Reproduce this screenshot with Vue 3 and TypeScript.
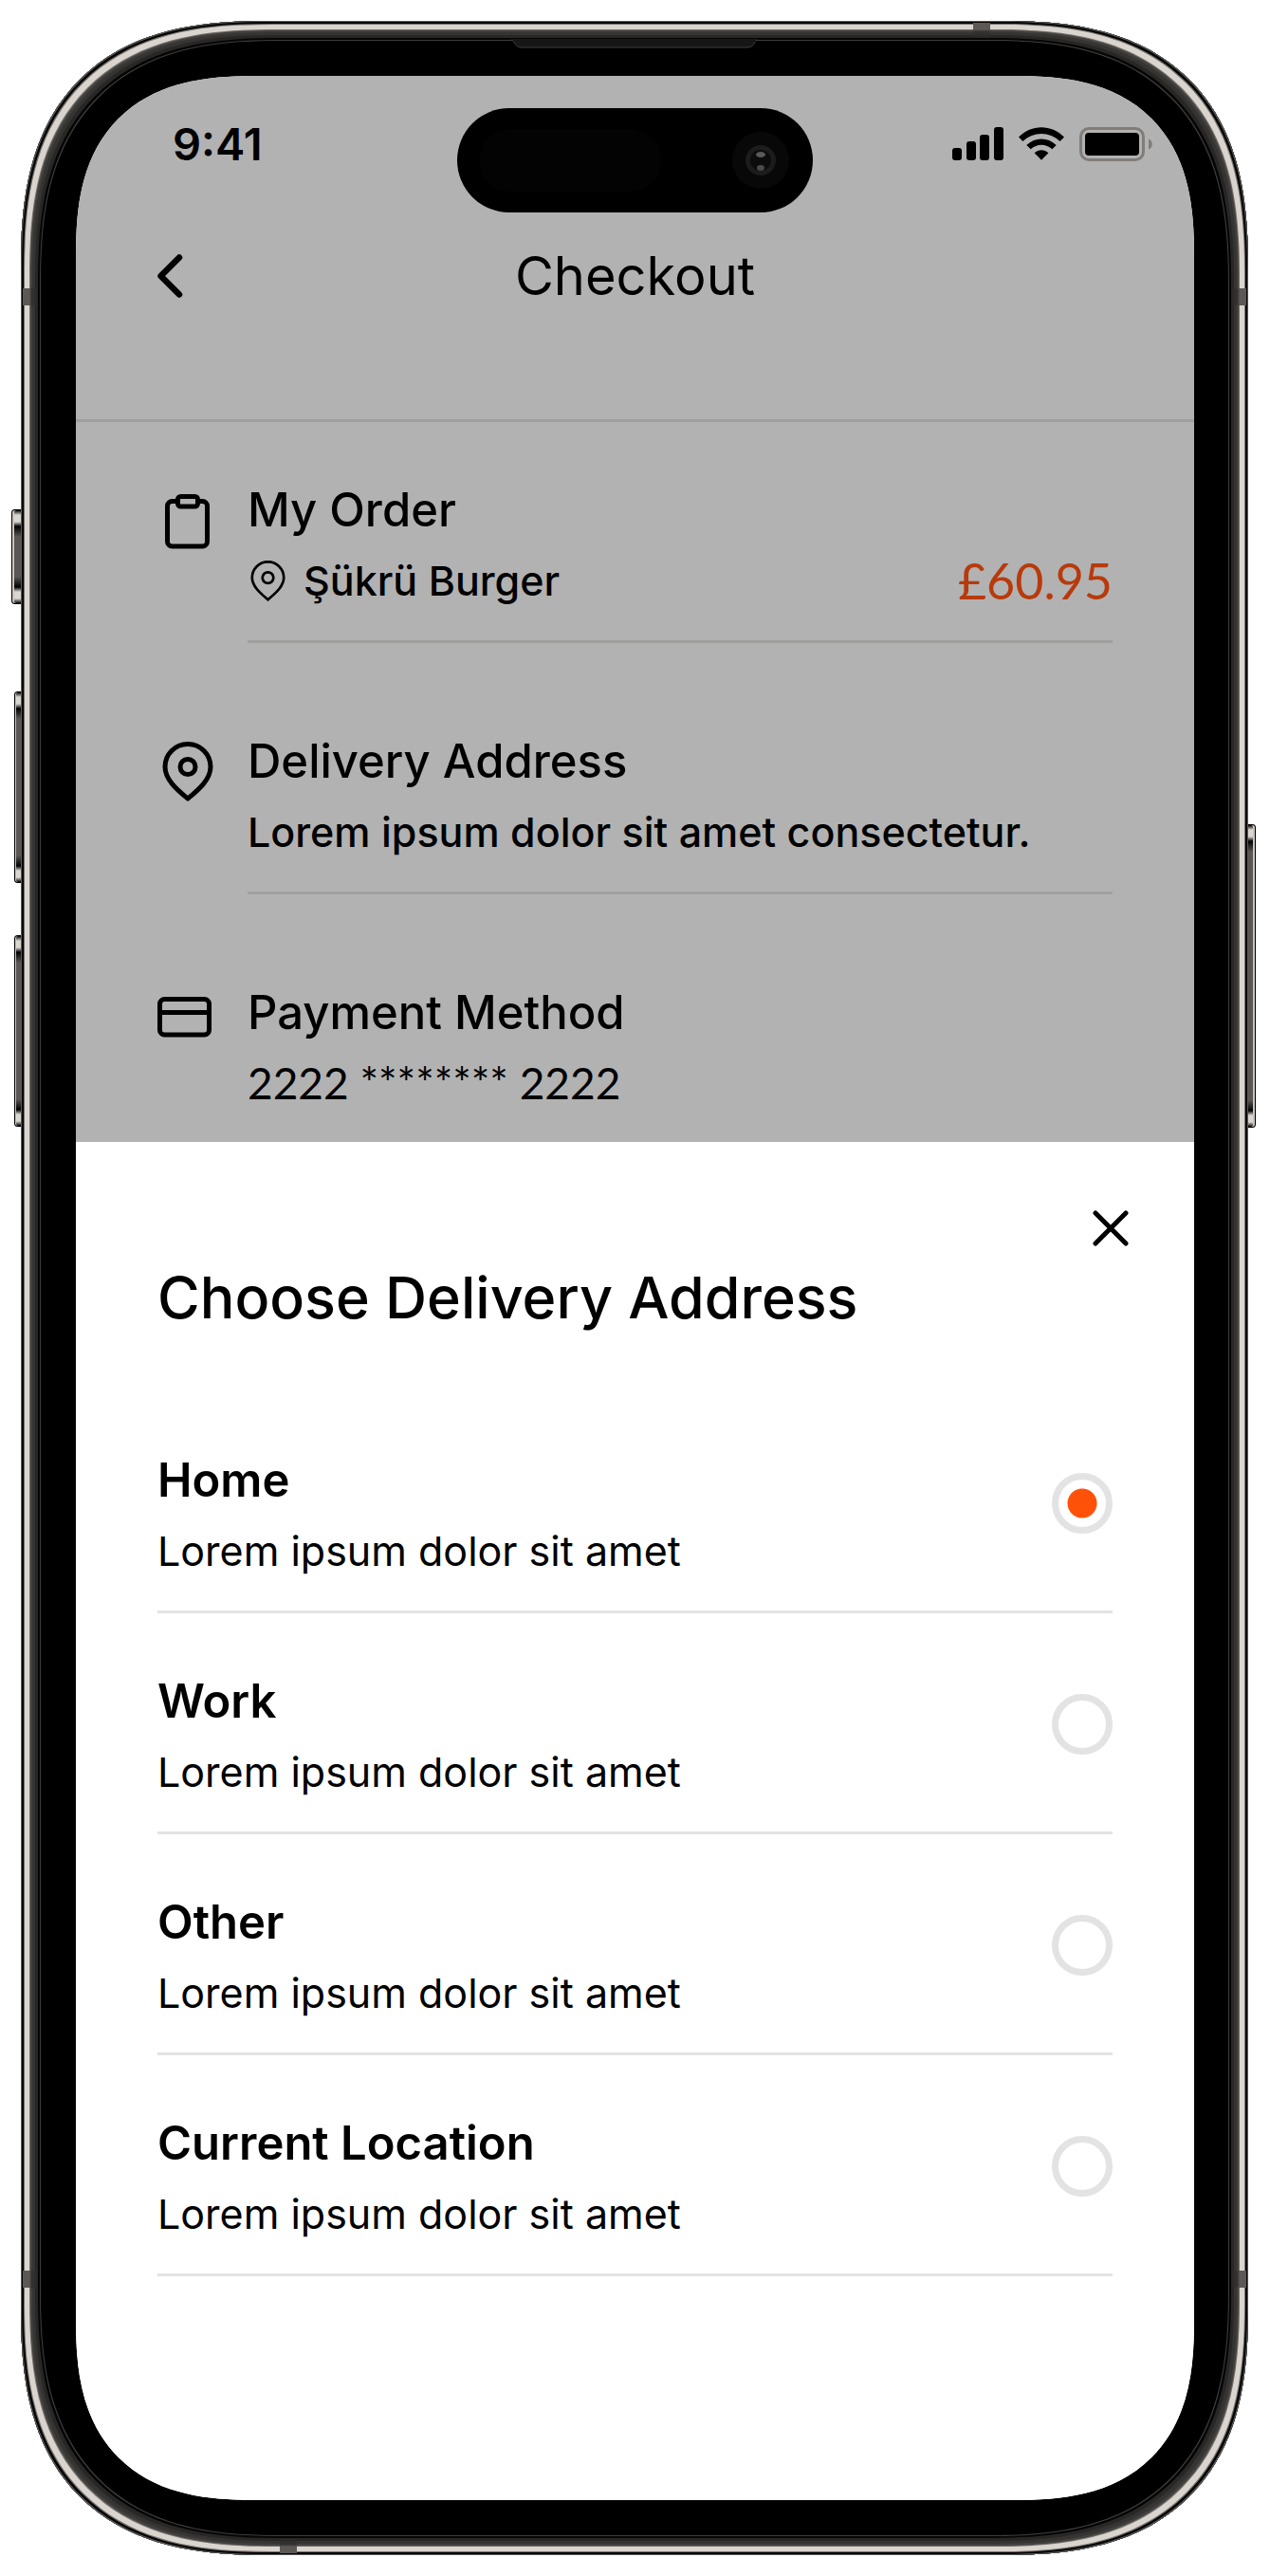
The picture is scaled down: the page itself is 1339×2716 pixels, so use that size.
<script setup lang="ts">
import { ref } from 'vue'

interface Address {
  id: string
  label: string
  detail: string
}

const addresses: Address[] = [
  { id: 'home', label: 'Home', detail: 'Lorem ipsum dolor sit amet' },
  { id: 'work', label: 'Work', detail: 'Lorem ipsum dolor sit amet' },
  { id: 'other', label: 'Other', detail: 'Lorem ipsum dolor sit amet' },
  { id: 'current', label: 'Current Location', detail: 'Lorem ipsum dolor sit amet' },
]

const selected = ref('home')
</script>

<template>
  <div class="device">
    <!-- hardware buttons -->
    <span class="key key-action"></span>
    <span class="key key-up"></span>
    <span class="key key-down"></span>
    <span class="key key-power"></span>

    <div class="phone">
      <!-- antenna bands and earpiece -->
      <span class="band band-side band-left band-upper"></span>
      <span class="band band-side band-right band-upper"></span>
      <span class="band band-side band-left band-lower"></span>
      <span class="band band-side band-right band-lower"></span>
      <span class="band band-cap band-top"></span>
      <span class="band band-cap band-bottom"></span>
      <svg class="earpiece" viewBox="0 0 260 10" width="260" height="10" aria-hidden="true">
        <path d="M0 0C4 2 3 8 10 9H250C257 8 256 2 260 0Z" fill="#161616" />
        <path d="M0 1C4 2 3 8 10 9H250C257 8 256 2 260 1" fill="none" stroke="#3f3f3f" />
      </svg>

      <div class="screen">
        <main class="checkout">
          <div class="status">
            <div class="status-side">
              <span class="time">9:41</span>
            </div>
            <div class="island">
              <span class="sensor"></span>
              <svg viewBox="0 0 60 60" width="60" height="60" aria-hidden="true">
                <circle cx="30" cy="30" r="30" fill="#080808" />
                <circle cx="30" cy="30" r="16" fill="#1d1c1c" />
                <circle cx="30" cy="30" r="11" fill="#0c0c0c" />
                <ellipse cx="30" cy="24" rx="5" ry="3" fill="#5c5a59" />
                <ellipse cx="30" cy="38" rx="4" ry="3" fill="#4c4a49" />
              </svg>
            </div>
            <div class="status-side status-icons">
              <svg viewBox="0 0 54 36" width="54" height="36" aria-hidden="true">
                <rect x="0" y="22" width="10" height="13" rx="3" />
                <rect x="15" y="15" width="10" height="20" rx="3" />
                <rect x="29" y="8" width="10" height="27" rx="3" />
                <rect x="44" y="0" width="10" height="35" rx="3" />
              </svg>
              <svg viewBox="0 0 48 36" width="48" height="36" aria-hidden="true">
                <path d="M0 10.6C13.5-3.2 34.5-3.2 48 10.6L43.6 15C32.4 4.2 15.6 4.2 4.4 15Z" />
                <path d="M8.3 18.9C17.5 10.3 30.5 10.3 39.7 18.9L35.3 23.3C28.5 17.3 19.5 17.3 12.7 23.3Z" />
                <path d="M16.6 27.3C21 23.3 27 23.3 31.4 27.3L24 34.7Z" />
              </svg>
              <svg viewBox="0 0 77 36" width="77" height="36" aria-hidden="true">
                <rect x="1.5" y="1.5" width="66" height="33" rx="8.5" fill="none" stroke="#807c7a" stroke-width="3" />
                <rect x="6" y="6" width="57" height="24" rx="4" />
                <path d="M73 12.5C78 14.5 78 21.5 73 23.5Z" fill="#807c7a" />
              </svg>
            </div>
          </div>

          <header class="nav">
            <button class="back" type="button" aria-label="Back">
              <svg viewBox="0 0 27 46" width="27" height="46" aria-hidden="true">
                <path d="M23 3.5L3.5 23L23 42.5" fill="none" stroke="#000" stroke-width="6.5" stroke-linecap="round" stroke-linejoin="round" />
              </svg>
            </button>
            <h1 class="nav-title">Checkout</h1>
          </header>

          <div class="sections">
            <section class="section">
              <svg class="section-icon" viewBox="0 0 64 84" width="64" height="84" aria-hidden="true">
                <path d="M21.5 22.5H15.5A5 5 0 0 0 10.5 27.5V65A5 5 0 0 0 15.5 70H47.5A5 5 0 0 0 52.5 65V27.5A5 5 0 0 0 47.5 22.5H42.5" />
                <rect x="21.5" y="17.5" width="21" height="10.5" rx="3" />
              </svg>
              <div class="section-body">
                <h2 class="section-title">My Order</h2>
                <div class="section-row">
                  <span class="place">
                    <svg class="place-pin" viewBox="5 11 54 63" width="37" height="43" aria-hidden="true">
                      <path d="M32 71.5C23 63.5 7.5 52 7.5 37.5A24.5 24.5 0 0 1 56.5 37.5C56.5 52 41 63.5 32 71.5Z" />
                      <circle cx="32" cy="37.5" r="8.5" />
                    </svg>
                    <span class="section-text">Şükrü Burger</span>
                  </span>
                  <span class="price">£60.95</span>
                </div>
              </div>
            </section>

            <section class="section">
              <svg class="section-icon" viewBox="0 0 64 84" width="64" height="84" aria-hidden="true">
                <path d="M32 71C23 63.5 8 52 8 37.5A24 24 0 0 1 56 37.5C56 52 41 63.5 32 71Z" />
                <circle cx="32" cy="37.5" r="8" />
              </svg>
              <div class="section-body">
                <h2 class="section-title">Delivery Address</h2>
                <div class="section-row">
                  <span class="section-text">Lorem ipsum dolor sit amet consectetur.</span>
                </div>
              </div>
            </section>

            <section class="section">
              <svg class="section-icon" viewBox="0 0 64 84" width="64" height="84" aria-hidden="true">
                <rect x="2.5" y="17.5" width="52" height="37.5" rx="5" />
                <path d="M2.5 31.5H54.5" />
              </svg>
              <div class="section-body">
                <h2 class="section-title">Payment Method</h2>
                <div class="section-row">
                  <span class="card-number">2222 ******** 2222</span>
                </div>
              </div>
            </section>
          </div>
        </main>

        <form class="sheet" role="dialog" aria-labelledby="sheet-title" @submit.prevent>
          <button class="close" type="button" aria-label="Close">
            <svg viewBox="0 0 38 38" width="38" height="38" aria-hidden="true">
              <path d="M3 3L35 35M35 3L3 35" fill="none" stroke="#000" stroke-width="5" stroke-linecap="round" />
            </svg>
          </button>
          <h2 id="sheet-title" class="sheet-title">Choose Delivery Address</h2>
          <div class="options">
            <label v-for="a in addresses" :key="a.id" class="option" :for="a.id">
              <span class="option-body">
                <span class="option-label">{{ a.label }}</span>
                <span class="option-detail">{{ a.detail }}</span>
              </span>
              <input :id="a.id" v-model="selected" class="radio" type="radio" name="address" :value="a.id" />
            </label>
          </div>
        </form>
      </div>
    </div>
  </div>
</template>

<style>
body {
  margin: 0;
  background: #fff;
}
</style>

<style scoped>
* {
  box-sizing: border-box;
}

h1,
h2 {
  margin: 0;
  font-weight: 500;
}

svg {
  display: block;
  flex: none;
}

button {
  padding: 0;
  border: 0;
  background: none;
  cursor: pointer;
}

.device {
  position: relative;
  display: flow-root;
  padding: 22px 23px 22px 22px;
  font-family: Inter, "Liberation Sans", sans-serif;
  color: #000;
}

.phone {
  position: relative;
  padding: 58px 57px 58px 58px;
  border-radius: 213px;
  background: #000;
  box-shadow:
    inset 0 0 0 1px #5a5a5a,
    inset 0 0 0 3px #050505,
    inset 0 0 0 4px #75716e,
    inset 0 0 0 9px #d9d4ce,
    inset 0 0 0 10px #716d6a,
    inset 0 0 0 12px #42403e,
    inset 0 0 0 15px #353432,
    inset 0 0 0 18px #282725,
    inset 0 0 0 20px #050505,
    inset 0 0 0 21px #3d3d3d;
}

.screen {
  overflow: hidden;
  border-radius: 155px;
  background: #fff;
}

@supports (corner-shape: superellipse(1.36)) {
  .phone {
    border-radius: 262px;
    corner-shape: superellipse(1.36);
  }

  .screen {
    border-radius: 190px;
    corner-shape: superellipse(1.36);
  }
}

/* Hardware buttons */
.key {
  position: absolute;
  border: 1px solid #000;
  background: linear-gradient(#000, #dad6d0 5px, #dad6d0 12px, #000 17px, #5a5654 28px, #5a5654 calc(100% - 28px), #000 calc(100% - 17px), #dad6d0 calc(100% - 12px), #dad6d0 calc(100% - 5px), #000);
}

.key-action {
  top: 537px;
  left: 12px;
  width: 16px;
  height: 100px;
  border-radius: 3px 0 0 3px;
  box-shadow: inset 2px 0 #c9c5c0;
}

.key-up,
.key-down {
  left: 15px;
  width: 13px;
  height: 202px;
  border-radius: 3px 0 0 3px;
  box-shadow: inset 1px 0 #c9c5c0;
}

.key-up {
  top: 729px;
}

.key-down {
  top: 986px;
}

.key-power {
  top: 869px;
  right: 15px;
  width: 13px;
  height: 320px;
  border-radius: 0 3px 3px 0;
  box-shadow: inset -2px 0 #c9c5c0;
}

/* Antenna bands */
.band {
  position: absolute;
}

.band-side {
  width: 16px;
  height: 18px;
}

.band-left {
  left: 2px;
  background: linear-gradient(90deg, #5c5855 7px, #353432 9px, #282725);
}

.band-right {
  right: 2px;
  background: linear-gradient(270deg, #5c5855 7px, #353432 9px, #282725);
}

.band-upper {
  top: 282px;
}

.band-lower {
  bottom: 282px;
}

.band-cap {
  width: 18px;
  height: 16px;
}

.band-top {
  top: 2px;
  right: 272px;
  background: linear-gradient(#5c5855 7px, #353432 9px, #282725);
}

.band-bottom {
  bottom: 2px;
  left: 273px;
  background: linear-gradient(0deg, #5c5855 7px, #353432 9px, #282725);
}

.earpiece {
  position: absolute;
  top: 19px;
  left: calc(50% - 130px);
}

/* Dimmed checkout page */
.checkout {
  background: #b2b2b2;
}

.status {
  display: flex;
  align-items: center;
  height: 178px;
  padding: 0 44px 0 102px;
}

.status-side {
  flex: 1 0 0;
  display: flex;
  align-items: center;
  padding-bottom: 34px;
}

.status-side:first-child {
  margin-right: -58px;
}

.time {
  font-size: 47px;
  line-height: 56px;
  font-weight: 600;
}

.island {
  flex: none;
  display: flex;
  align-items: center;
  justify-content: space-between;
  width: 375px;
  height: 110px;
  padding: 0 25px 0 23px;
  border-radius: 55px;
  background: #000;
}

.sensor {
  width: 192px;
  height: 66px;
  border-radius: 33px;
  background: #030303;
}

.status-icons {
  justify-content: flex-end;
  gap: 16px;
}

.nav {
  display: grid;
  grid-template-columns: 1fr auto 1fr;
  align-items: center;
  padding: 0 86px 118px;
  border-bottom: 3px solid #9f9f9e;
}

.back {
  justify-self: start;
}

.nav-title {
  font-size: 56px;
  line-height: 66px;
  font-weight: 400;
}

.sections {
  display: grid;
  gap: 93px;
  padding: 61px 86px 34px;
}

.section {
  display: grid;
  grid-template-columns: 95px 1fr;
}

.section-icon {
  overflow: visible;
  fill: none;
  stroke: #000;
  stroke-width: 5px;
  stroke-linecap: round;
  stroke-linejoin: round;
}

.section-body {
  display: grid;
  gap: 14px;
  padding-bottom: 35px;
  border-bottom: 3px solid #9f9f9e;
}

.section:last-child .section-body {
  padding-bottom: 0;
  border-bottom: 0;
}

.section-title {
  font-size: 49px;
  line-height: 64px;
}

.section-row {
  display: flex;
  align-items: center;
  justify-content: space-between;
  height: 56px;
}

.place {
  display: flex;
  align-items: center;
  gap: 19px;
  padding-left: 3px;
}

.place-pin {
  fill: none;
  stroke: #000;
  stroke-width: 4px;
}

.section-text {
  font-size: 43px;
  line-height: 56px;
  font-weight: 500;
}

.price {
  font-family: Lato, "Liberation Sans", sans-serif;
  font-size: 52px;
  line-height: 56px;
  color: #b83a0c;
}

.card-number {
  font-family: Lato, "Liberation Sans", sans-serif;
  font-size: 46px;
  line-height: 56px;
}

/* Address sheet */
.sheet {
  display: flex;
  flex-direction: column;
  padding: 55px 86px 236px;
  background: #fff;
}

.close {
  display: grid;
  place-items: center;
  align-self: flex-end;
  width: 72px;
  height: 72px;
  margin-right: -34px;
}

.sheet-title {
  font-size: 61px;
  line-height: 74px;
}

.options {
  margin-top: 63px;
}

.option {
  display: flex;
  align-items: flex-start;
  justify-content: space-between;
  padding: 61px 0 35px;
  border-bottom: 3px solid #e3e3e3;
  cursor: pointer;
}

.option-body {
  display: grid;
  gap: 14px;
}

.option-label {
  font-size: 49px;
  line-height: 64px;
  font-weight: 600;
}

.option-detail {
  font-size: 43px;
  line-height: 56px;
}

.radio {
  flex: none;
  appearance: none;
  width: 64px;
  height: 64px;
  margin: 24px 0 0;
  border: 7px solid #e3e3e3;
  border-radius: 50%;
  background: #fff;
  cursor: pointer;
}

.radio:checked {
  background: radial-gradient(circle, #ff5208 15px, #fff 16px);
}
</style>
